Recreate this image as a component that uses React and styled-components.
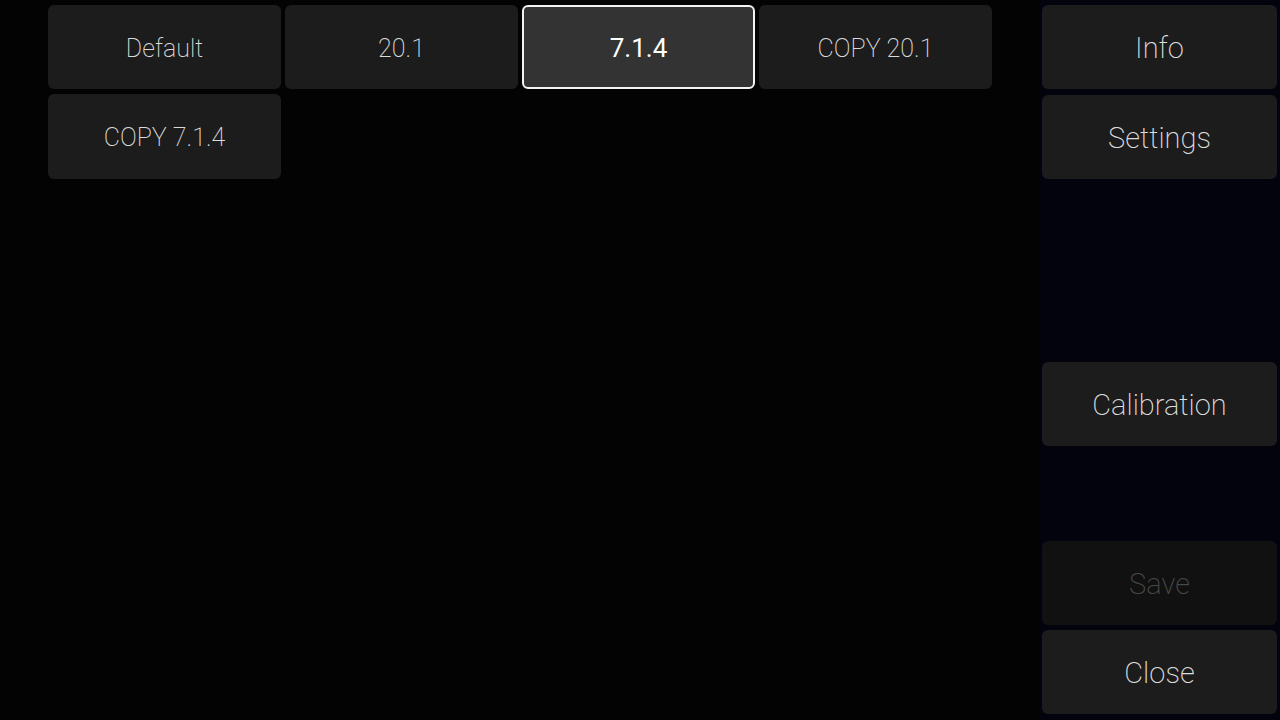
import styled, { createGlobalStyle } from 'styled-components';

const GlobalStyle = createGlobalStyle`
    html, body {
        margin: 0;
        padding: 0;
        background: #030303;
        font-family: Roboto, "Liberation Sans", sans-serif;
    }
`;

const Screen = styled.div`
    display: flex;
    width: 1280px;
    height: 720px;
    background: #030303;
    overflow: hidden;
`;

const PresetArea = styled.div`
    flex: 1;
    padding: 5px 0 0 48px;
`;

const PresetGrid = styled.div`
    display: grid;
    grid-template-columns: repeat(4, 233px);
    grid-template-rows: 84px 85px;
    column-gap: 4px;
    row-gap: 5px;
`;

const Tile = styled.button`
    display: flex;
    align-items: center;
    justify-content: center;
    box-sizing: border-box;
    border-radius: 6px;
    border: ${(p) => (p.$active ? '2px solid #f2f2f2' : 'none')};
    background: ${(p) => (p.$active ? '#333333' : '#1c1c1c')};
    color: ${(p) => (p.$active ? '#ffffff' : '#dadada')};
    font-family: Roboto, "Liberation Sans", sans-serif;
    font-size: ${(p) => (p.$active ? 26 : 25)}px;
    font-weight: ${(p) => (p.$active ? 400 : 220)};
    padding: 2px 0 0;
`;

const SidePanel = styled.div`
    width: 240px;
    display: flex;
    flex-direction: column;
    box-sizing: border-box;
    padding: 5px 3px 0 2px;
    background: #03030e;
`;

const SideButton = styled.button`
    display: flex;
    align-items: center;
    justify-content: center;
    height: 84px;
    flex-shrink: 0;
    margin-top: ${(p) => p.$top || 0}px;
    border: none;
    border-radius: 6px;
    background: ${(p) => (p.$disabled ? '#111111' : '#1c1c1c')};
    color: ${(p) => (p.$disabled ? '#484848' : '#dedede')};
    font-family: Roboto, "Liberation Sans", sans-serif;
    font-size: 29px;
    font-weight: 220;
    padding: 2px 0 0;
`;

const presets = ['Default', '20.1', '7.1.4', 'COPY 20.1', 'COPY 7.1.4'];

export default function App() {
    return (
        <>
            <GlobalStyle />
            <Screen>
                <PresetArea>
                    <PresetGrid>
                        {presets.map((name) => (
                            <Tile key={name} $active={name === '7.1.4'}>
                                {name}
                            </Tile>
                        ))}
                    </PresetGrid>
                </PresetArea>
                <SidePanel>
                    <SideButton>Info</SideButton>
                    <SideButton $top={6}>Settings</SideButton>
                    <SideButton $top={183}>Calibration</SideButton>
                    <SideButton $top={95} $disabled>Save</SideButton>
                    <SideButton $top={5}>Close</SideButton>
                </SidePanel>
            </Screen>
        </>
    );
}
